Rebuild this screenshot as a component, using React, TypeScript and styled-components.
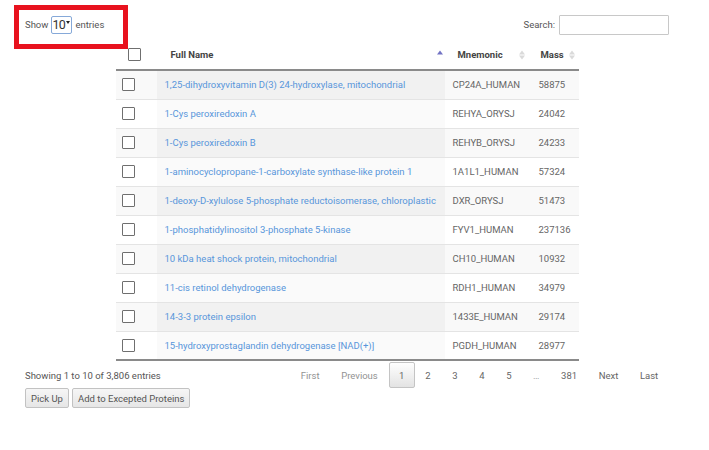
import React from "react";
import styled, { createGlobalStyle } from "styled-components";

const Global = createGlobalStyle`
  html, body { margin: 0; padding: 0; background: #fff; }
  body { font-family: Roboto, "Liberation Sans", Arial, sans-serif; font-size: 9.5px; color: #555; }
`;

const Page = styled.div`
  position: relative;
  width: 709px;
  height: 450px;
  padding: 0 40px 0 25px;
  box-sizing: border-box;
`;

const TopBar = styled.div`
  display: flex;
  justify-content: space-between;
  align-items: center;
  height: 40px;
  padding-top: 9px;
  box-sizing: border-box;
`;

const LengthCtl = styled.label`
  display: flex;
  align-items: center;
  gap: 3px;
  color: #555;
`;

const Annotation = styled.div`
  position: absolute;
  left: 14px;
  top: 5px;
  width: 114px;
  height: 44px;
  border: 5px solid #e8121e;
  box-sizing: border-box;
  pointer-events: none;
`;

const FakeSelect = styled.span`
  display: inline-flex;
  align-items: center;
  width: 21px;
  height: 18px;
  padding: 0;
  border: 1px solid #86a9d9;
  border-radius: 2px;
  font-size: 12.5px;
  letter-spacing: -0.8px;
  color: #333;
  box-sizing: border-box;
  overflow: hidden;
`;

const Caret = styled.span`
  display: inline-block;
  flex: none;
  width: 0;
  height: 0;
  border-left: 2.5px solid transparent;
  border-right: 2.5px solid transparent;
  border-top: 3px solid #222;
  margin-left: 1.5px;
  margin-top: -4px;
`;

const SearchCtl = styled.label`
  display: flex;
  align-items: center;
  gap: 4px;
  color: #555;
`;

const SearchInput = styled.input`
  width: 110px;
  height: 20px;
  box-sizing: border-box;
  border: 1px solid #c8c8c8;
  border-radius: 1px;
  padding: 0 4px;
  font: inherit;
  outline: none;
`;

const Table = styled.table`
  width: 463px;
  margin: 0 auto;
  border-collapse: collapse;
  table-layout: fixed;
  border-bottom: 2px solid #8a8a8a;
`;

const HeadRow = styled.tr`
  height: 30px;
  border-bottom: 2px solid #8a8a8a;
`;

const Th = styled.th<{ $pl: number }>`
  position: relative;
  text-align: left;
  font-weight: bold;
  color: #444;
  padding: 0 0 0 ${(p) => p.$pl}px;
  white-space: nowrap;
`;

const SortIcon = styled.span<{ $active?: boolean; $right: number }>`
  position: absolute;
  right: ${(p) => p.$right}px;
  top: 50%;
  transform: translateY(-50%);
  display: flex;
  flex-direction: column;
  gap: 1px;
  & > i {
    display: block;
    width: 0;
    height: 0;
    border-left: 3px solid transparent;
    border-right: 3px solid transparent;
  }
  & > i.up { border-bottom: 4px solid ${(p) => (p.$active ? "#7273c4" : "#dadada")}; }
  & > i.down { border-top: 4px solid ${(p) => (p.$active ? "transparent" : "#dadada")}; }
`;

const Row = styled.tr<{ $odd: boolean }>`
  height: 29px;
  background: ${(p) => (p.$odd ? "#f9f9f9" : "#fff")};
  border-top: 1px solid #e4e4e4;
  &:first-child { border-top: none; }
`;

const Td = styled.td<{ $sorted?: boolean; $odd?: boolean; $pl?: number }>`
  padding: 0 0 0 ${(p) => p.$pl ?? 8}px;
  white-space: nowrap;
  overflow: hidden;
  color: #666;
  background: ${(p) => (p.$sorted ? (p.$odd ? "#f1f1f1" : "#fafafa") : "transparent")};
`;

const Link = styled.a`
  color: #5896db;
  text-decoration: none;
`;

const Box = styled.span`
  display: block;
  width: 13px;
  height: 13px;
  border: 1px solid #6f6f6f;
  border-radius: 1px;
  box-sizing: border-box;
  background: #fff;
`;

const FooterRow = styled.div`
  display: flex;
  align-items: center;
  justify-content: space-between;
  height: 26px;
  margin-top: 1px;
`;

const Info = styled.div`
  color: #555;
`;

const Pager = styled.div`
  display: flex;
  align-items: center;
`;

const PageBtn = styled.span<{ $current?: boolean; $muted?: boolean }>`
  display: inline-flex;
  align-items: center;
  justify-content: center;
  height: 26px;
  padding: 0 9.8px;
  box-sizing: border-box;
  color: ${(p) => (p.$muted ? "#929292" : "#666")};
  border: 1px solid ${(p) => (p.$current ? "#c4c4c4" : "transparent")};
  border-radius: 2px;
  background: ${(p) => (p.$current ? "linear-gradient(#fefefe, #e3e3e3)" : "transparent")};
  ${(p) => (p.$current ? "padding: 0; width: 26px;" : "")}
`;

const Actions = styled.div`
  display: flex;
  gap: 3px;
`;

const ActionBtn = styled.button`
  height: 20px;
  padding: 0 5px;
  font: inherit;
  color: #555;
  border: 1px solid #c2c2c2;
  border-radius: 2px;
  background: linear-gradient(#f6f6f6, #e6e6e6);
`;

const rows: [string, string, string][] = [
  ["1,25-dihydroxyvitamin D(3) 24-hydroxylase, mitochondrial", "CP24A_HUMAN", "58875"],
  ["1-Cys peroxiredoxin A", "REHYA_ORYSJ", "24042"],
  ["1-Cys peroxiredoxin B", "REHYB_ORYSJ", "24233"],
  ["1-aminocyclopropane-1-carboxylate synthase-like protein 1", "1A1L1_HUMAN", "57324"],
  ["1-deoxy-D-xylulose 5-phosphate reductoisomerase, chloroplastic", "DXR_ORYSJ", "51473"],
  ["1-phosphatidylinositol 3-phosphate 5-kinase", "FYV1_HUMAN", "237136"],
  ["10 kDa heat shock protein, mitochondrial", "CH10_HUMAN", "10932"],
  ["11-cis retinol dehydrogenase", "RDH1_HUMAN", "34979"],
  ["14-3-3 protein epsilon", "1433E_HUMAN", "29174"],
  ["15-hydroxyprostaglandin dehydrogenase [NAD(+)]", "PGDH_HUMAN", "28977"],
];

export default function App() {
  return (
    <Page>
      <Global />
      <TopBar>
        <LengthCtl>
          Show
          <FakeSelect>
            10
            <Caret />
          </FakeSelect>
          entries
        </LengthCtl>
        <SearchCtl>
          Search:
          <SearchInput type="text" />
        </SearchCtl>
      </TopBar>
      <Table>
        <colgroup>
          <col style={{ width: 41 }} />
          <col style={{ width: 288 }} />
          <col style={{ width: 86 }} />
          <col style={{ width: 48 }} />
        </colgroup>
        <thead>
          <HeadRow>
            <Th $pl={12}>
              <Box />
            </Th>
            <Th $pl={14}>
              Full Name
              <SortIcon $active $right={2}>
                <i className="up" />
                <i className="down" />
              </SortIcon>
            </Th>
            <Th $pl={13}>
              Mnemonic
              <SortIcon $right={6}>
                <i className="up" />
                <i className="down" />
              </SortIcon>
            </Th>
            <Th $pl={10}>
              Mass
              <SortIcon $right={4}>
                <i className="up" />
                <i className="down" />
              </SortIcon>
            </Th>
          </HeadRow>
        </thead>
        <tbody>
          {rows.map(([name, mn, mass], i) => {
            const odd = i % 2 === 0;
            return (
              <Row key={name} $odd={odd}>
                <Td $pl={6}>
                  <Box />
                </Td>
                <Td $sorted $odd={odd}>
                  <Link href="#">{name}</Link>
                </Td>
                <Td>{mn}</Td>
                <Td>{mass}</Td>
              </Row>
            );
          })}
        </tbody>
      </Table>
      <FooterRow>
        <Info>Showing 1 to 10 of 3,806 entries</Info>
        <Pager>
          <PageBtn $muted>First</PageBtn>
          <PageBtn $muted>Previous</PageBtn>
          <PageBtn $current>1</PageBtn>
          <PageBtn>2</PageBtn>
          <PageBtn>3</PageBtn>
          <PageBtn>4</PageBtn>
          <PageBtn>5</PageBtn>
          <PageBtn $muted>…</PageBtn>
          <PageBtn>381</PageBtn>
          <PageBtn>Next</PageBtn>
          <PageBtn>Last</PageBtn>
        </Pager>
      </FooterRow>
      <Actions>
        <ActionBtn>Pick Up</ActionBtn>
        <ActionBtn>Add to Excepted Proteins</ActionBtn>
      </Actions>
      <Annotation />
    </Page>
  );
}
